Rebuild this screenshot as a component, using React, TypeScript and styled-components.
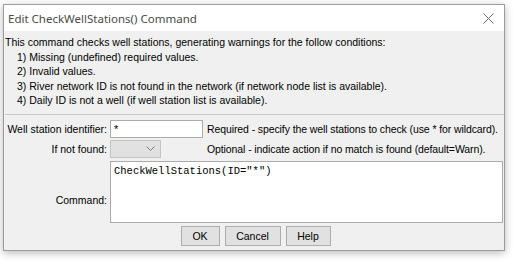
import React from "react";
import styled, { createGlobalStyle } from "styled-components";

const Global = createGlobalStyle`
  html, body { margin: 0; padding: 0; background: #ffffff; }
  body { width: 513px; height: 261px; overflow: hidden; }
`;

const Page = styled.div`
  padding: 4px 8px 0 3px;
`;

const Window = styled.div`
  width: 502px;
  height: 247px;
  box-sizing: border-box;
  border: 1px solid #9c9c9c;
  background: #f0f0f0;
  box-shadow: 0 2px 8px rgba(0, 0, 0, 0.28);
  display: flex;
  flex-direction: column;
  font-family: "Liberation Sans", Arial, sans-serif;
  font-size: 10.5px;
  color: #000;
`;

const TitleBar = styled.div`
  height: 26px;
  background: #ffffff;
  display: flex;
  align-items: center;
  justify-content: space-between;
  padding: 0 10px 0 4px;
  flex-shrink: 0;
`;

const Title = styled.span`
  font-family: "Noto Sans", "Open Sans", sans-serif;
  font-size: 11.5px;
  color: #4a4a4a;
`;

const Body = styled.div`
  display: flex;
  flex-direction: column;
  padding: 4px 0 0 1px;
  flex: 1;
`;

const Notes = styled.div`
  display: flex;
  flex-direction: column;
  padding-bottom: 6px;
  border-bottom: 1px solid #c8c8c8;
`;

const NoteLine = styled.div<{ $indent?: boolean }>`
  height: 14.6px;
  line-height: 14.6px;
  padding-left: ${(p) => (p.$indent ? "12px" : "0")};
  white-space: nowrap;
`;

const Form = styled.div`
  display: grid;
  grid-template-columns: 102px auto 1fr;
  column-gap: 3px;
  row-gap: 2px;
  padding-top: 5px;
  align-items: center;
`;

const Label = styled.div<{ $low?: boolean }>`
  text-align: right;
  white-space: nowrap;
  margin-top: ${(p) => (p.$low ? "18px" : "0")};
`;

const TextField = styled.div`
  width: 93px;
  height: 18px;
  box-sizing: border-box;
  background: #fff;
  border: 1px solid #ababab;
  padding: 1px 3px;
  font-size: 11px;
  line-height: 15px;
`;

const Combo = styled.div`
  width: 51px;
  height: 18px;
  box-sizing: border-box;
  background: #e1e1e1;
  border: 1px solid #c4c4c4;
  display: flex;
  align-items: center;
  justify-content: flex-end;
  padding-right: 5px;
`;

const Hint = styled.div`
  white-space: nowrap;
  padding-left: 1px;
  letter-spacing: -0.1px;
`;

const CommandArea = styled.div`
  grid-column: 2 / 4;
  height: 62px;
  margin-top: 1px;
  box-sizing: border-box;
  background: #fff;
  border: 1px solid #ababab;
  margin-right: 1px;
  padding: 2px 3px;
  font-family: "Liberation Mono", "Courier New", monospace;
  font-size: 10.5px;
  line-height: 14px;
`;

const Buttons = styled.div`
  display: flex;
  justify-content: center;
  gap: 5px;
  padding-top: 3px;
  padding-left: 2px;
`;

const Button = styled.div<{ $w: number }>`
  width: ${(p) => p.$w}px;
  height: 20px;
  box-sizing: border-box;
  background: #e1e1e1;
  border: 1px solid #adadad;
  display: flex;
  align-items: center;
  justify-content: center;
  font-family: "Liberation Sans", Arial, sans-serif;
  font-size: 10.5px;
`;

const CloseIcon = () => (
  <svg width="11" height="11" viewBox="0 0 11 11">
    <path d="M0.5 0.5 L10.5 10.5 M10.5 0.5 L0.5 10.5" stroke="#6a6a6a" strokeWidth="1" fill="none" />
  </svg>
);

const Chevron = () => (
  <svg width="9" height="5" viewBox="0 0 9 5">
    <path d="M0.5 0.5 L4.5 4.5 L8.5 0.5" stroke="#7a7a7a" strokeWidth="1" fill="none" />
  </svg>
);

export default function App() {
  return (
    <>
      <Global />
      <Page>
        <Window>
          <TitleBar>
            <Title>Edit CheckWellStations() Command</Title>
            <CloseIcon />
          </TitleBar>
          <Body>
            <Notes>
              <NoteLine>This command checks well stations, generating warnings for the follow conditions:</NoteLine>
              <NoteLine $indent>1) Missing (undefined) required values.</NoteLine>
              <NoteLine $indent>2) Invalid values.</NoteLine>
              <NoteLine $indent>3) River network ID is not found in the network (if network node list is available).</NoteLine>
              <NoteLine $indent>4) Daily ID is not a well (if well station list is available).</NoteLine>
            </Notes>
            <Form>
              <Label>Well station identifier:</Label>
              <TextField>*</TextField>
              <Hint>Required - specify the well stations to check (use * for wildcard).</Hint>
              <Label>If not found:</Label>
              <Combo>
                <Chevron />
              </Combo>
              <Hint>Optional - indicate action if no match is found (default=Warn).</Hint>
              <Label $low>Command:</Label>
              <CommandArea>CheckWellStations(ID="*")</CommandArea>
            </Form>
            <Buttons>
              <Button $w={39}>OK</Button>
              <Button $w={56}>Cancel</Button>
              <Button $w={45}>Help</Button>
            </Buttons>
          </Body>
        </Window>
      </Page>
    </>
  );
}
